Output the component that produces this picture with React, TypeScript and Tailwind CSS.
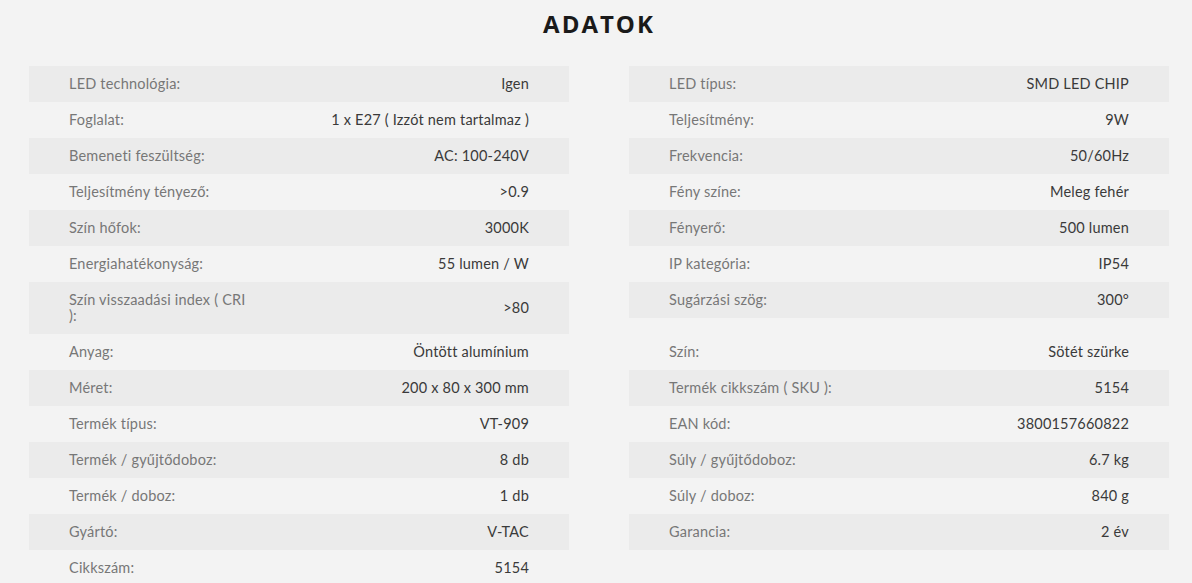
import React from "react";

type Row = [string, React.ReactNode];

const left: Row[] = [
  ["LED technológia:", "Igen"],
  ["Foglalat:", "1 x E27 ( Izzót nem tartalmaz )"],
  ["Bemeneti feszültség:", "AC: 100-240V"],
  ["Teljesítmény tényező:", ">0.9"],
  ["Szín hőfok:", "3000K"],
  ["Energiahatékonyság:", "55 lumen / W"],
  ["CRI", ">80"],
  ["Anyag:", "Öntött alumínium"],
  ["Méret:", "200 x 80 x 300 mm"],
  ["Termék típus:", "VT-909"],
  ["Termék / gyűjtődoboz:", "8 db"],
  ["Termék / doboz:", "1 db"],
  ["Gyártó:", "V-TAC"],
  ["Cikkszám:", "5154"],
];

const right: Row[] = [
  ["LED típus:", "SMD LED CHIP"],
  ["Teljesítmény:", "9W"],
  ["Frekvencia:", "50/60Hz"],
  ["Fény színe:", "Meleg fehér"],
  ["Fényerő:", "500 lumen"],
  ["IP kategória:", "IP54"],
  ["Sugárzási szög:", "300°"],
  ["Szín:", "Sötét szürke"],
  ["Termék cikkszám ( SKU ):", "5154"],
  ["EAN kód:", "3800157660822"],
  ["Súly / gyűjtődoboz:", "6.7 kg"],
  ["Súly / doboz:", "840 g"],
  ["Garancia:", "2 év"],
];

function Cell({ row, shaded }: { row: Row; shaded: boolean }) {
  const isCri = row[0] === "CRI";
  return (
    <div
      className={`flex items-center justify-between px-[40px] py-[10px] ${
        shaded ? "bg-[#ebebeb]" : ""
      }`}
    >
      <div className="w-[200px] text-[#777777]">
        {isCri ? (
          <>
            Szín visszaadási index ( CRI
            <br />
            ):
          </>
        ) : (
          row[0]
        )}
      </div>
      <div className="text-right text-[#3a3a3a]">{row[1]}</div>
    </div>
  );
}

export default function App() {
  const n = Math.max(left.length, right.length);
  const cells: React.ReactNode[] = [];
  for (let i = 0; i < n; i++) {
    const shaded = i % 2 === 0;
    cells.push(
      left[i] ? <Cell key={`l${i}`} row={left[i]} shaded={shaded} /> : <div key={`l${i}`} />
    );
    cells.push(
      right[i] ? <Cell key={`r${i}`} row={right[i]} shaded={shaded} /> : <div key={`r${i}`} />
    );
  }
  return (
    <div
      className="min-h-[583px] w-full bg-[#f3f3f3] pl-[29px]"
      style={{ fontFamily: "Lato, 'Noto Sans', sans-serif" }}
    >
      <h2
        className="w-[1140px] pt-[9px] pb-[28px] text-center text-[24px] leading-[29px] font-bold tracking-[2px] text-[#1a1a1a]"
        style={{ fontFamily: "'Open Sans', 'DejaVu Sans', sans-serif" }}
      >
        ADATOK
      </h2>
      <div className="grid w-[1140px] grid-cols-[540px_540px] items-start gap-x-[60px] text-[14.5px] leading-[16px] tracking-[0.2px]">
        {cells}
      </div>
    </div>
  );
}
